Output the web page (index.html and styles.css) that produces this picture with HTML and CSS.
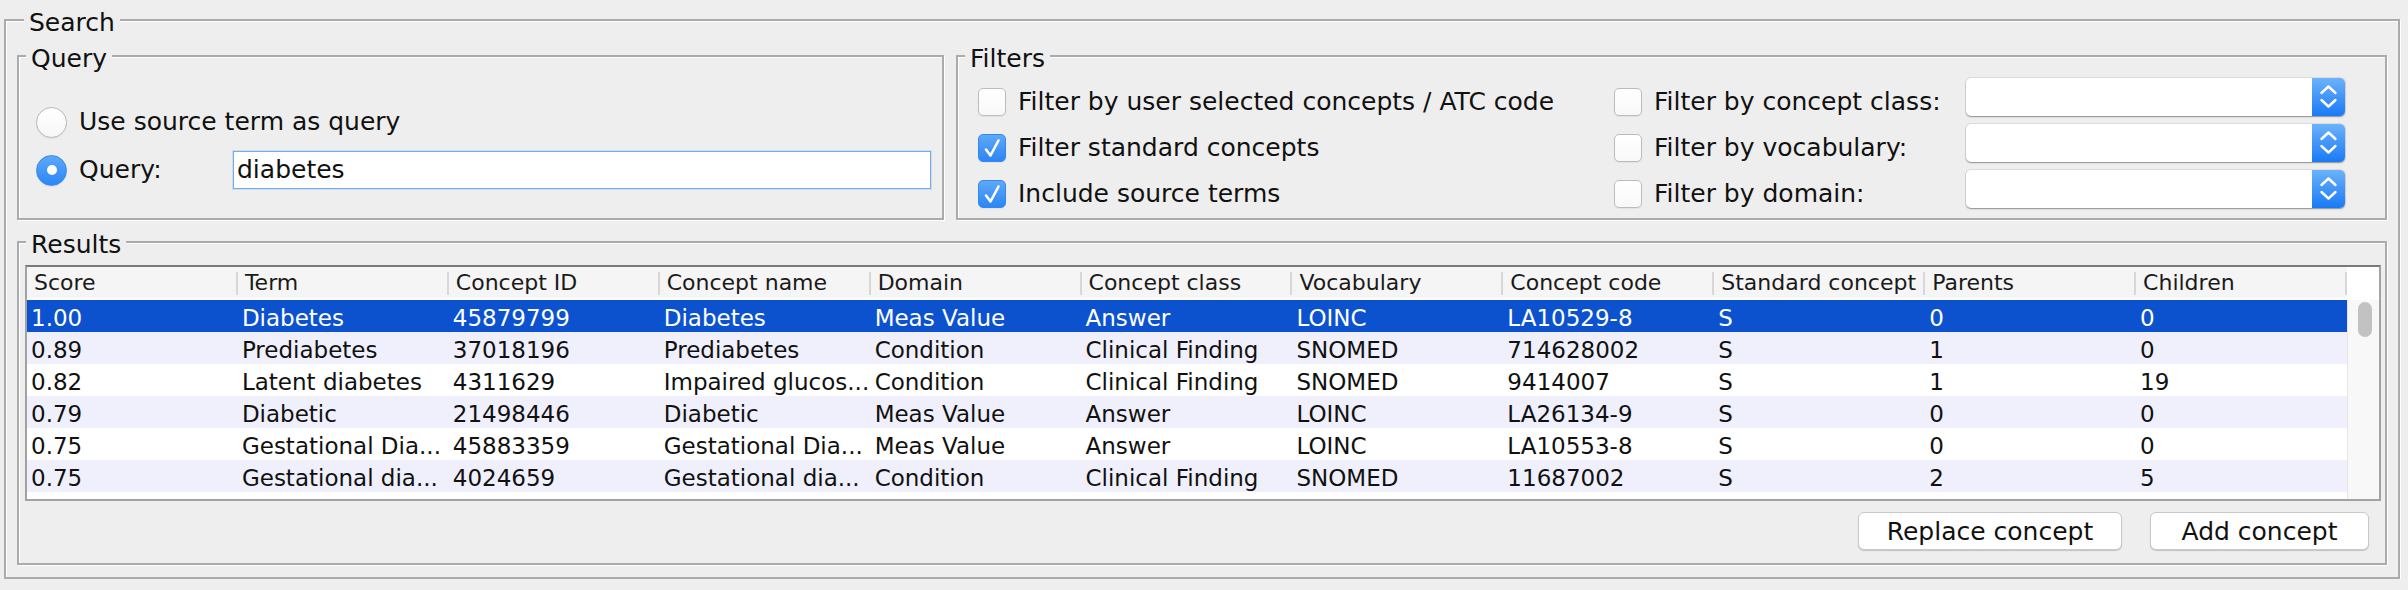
FILE: index.html
```html
<!DOCTYPE html>
<html>
<head>
<meta charset="utf-8">
<title>Search</title>
<link rel="stylesheet" href="styles.css">
</head>
<body>
<div class="page">
  <fieldset class="group search">
    <legend class="group-title">Search</legend>
    <div class="top-row">
      <fieldset class="group query">
        <legend class="group-title">Query</legend>
        <div class="query-body">
          <div class="query-row">
            <span class="radio"></span>
            <span class="label">Use source term as query</span>
          </div>
          <div class="query-row">
            <div class="query-label">
              <span class="radio on"></span>
              <span class="label">Query:</span>
            </div>
            <div class="textfield">diabetes</div>
          </div>
        </div>
      </fieldset>
      <fieldset class="group filters">
        <legend class="group-title">Filters</legend>
        <div class="filter-grid">
          <div class="check-item"><span class="check"></span><span class="label">Filter by user selected concepts / ATC code</span></div>
          <div class="check-item"><span class="check"></span><span class="label">Filter by concept class:</span></div>
          <div class="combo"><span class="combo-field"></span><span class="combo-btn"><svg width="33" height="38" viewBox="0 0 33 38"><polyline points="9.5,15 16.5,8.5 23.5,15" fill="none" stroke="#fff" stroke-width="2.4" stroke-linecap="round" stroke-linejoin="round"/><polyline points="9.5,22 16.5,28.5 23.5,22" fill="none" stroke="#fff" stroke-width="2.4" stroke-linecap="round" stroke-linejoin="round"/></svg></span></div>

          <div class="check-item"><span class="check on"><svg width="26" height="26" viewBox="0 0 26 26"><polyline points="7,14.5 11.5,20.5 19.5,5.5" fill="none" stroke="#fff" stroke-width="2.6" stroke-linecap="round" stroke-linejoin="round"/></svg></span><span class="label">Filter standard concepts</span></div>
          <div class="check-item"><span class="check"></span><span class="label">Filter by vocabulary:</span></div>
          <div class="combo"><span class="combo-field"></span><span class="combo-btn"><svg width="33" height="38" viewBox="0 0 33 38"><polyline points="9.5,15 16.5,8.5 23.5,15" fill="none" stroke="#fff" stroke-width="2.4" stroke-linecap="round" stroke-linejoin="round"/><polyline points="9.5,22 16.5,28.5 23.5,22" fill="none" stroke="#fff" stroke-width="2.4" stroke-linecap="round" stroke-linejoin="round"/></svg></span></div>

          <div class="check-item"><span class="check on"><svg width="26" height="26" viewBox="0 0 26 26"><polyline points="7,14.5 11.5,20.5 19.5,5.5" fill="none" stroke="#fff" stroke-width="2.6" stroke-linecap="round" stroke-linejoin="round"/></svg></span><span class="label">Include source terms</span></div>
          <div class="check-item"><span class="check"></span><span class="label">Filter by domain:</span></div>
          <div class="combo"><span class="combo-field"></span><span class="combo-btn"><svg width="33" height="38" viewBox="0 0 33 38"><polyline points="9.5,15 16.5,8.5 23.5,15" fill="none" stroke="#fff" stroke-width="2.4" stroke-linecap="round" stroke-linejoin="round"/><polyline points="9.5,22 16.5,28.5 23.5,22" fill="none" stroke="#fff" stroke-width="2.4" stroke-linecap="round" stroke-linejoin="round"/></svg></span></div>
        </div>
      </fieldset>
    </div>

    <fieldset class="group results">
      <legend class="group-title">Results</legend>
      <div class="results-body">
        <div class="table">
          <div class="table-main">
            <div class="thead">
              <div class="th">Score</div>
              <div class="th">Term</div>
              <div class="th">Concept ID</div>
              <div class="th">Concept name</div>
              <div class="th">Domain</div>
              <div class="th">Concept class</div>
              <div class="th">Vocabulary</div>
              <div class="th">Concept code</div>
              <div class="th">Standard concept</div>
              <div class="th">Parents</div>
              <div class="th">Children</div>
            </div>
            <div class="tbody">
              <div class="tr selected">
                <div class="td">1.00</div><div class="td">Diabetes</div><div class="td">45879799</div><div class="td">Diabetes</div><div class="td">Meas Value</div><div class="td">Answer</div><div class="td">LOINC</div><div class="td">LA10529-8</div><div class="td">S</div><div class="td">0</div><div class="td">0</div>
              </div>
              <div class="tr alt">
                <div class="td">0.89</div><div class="td">Prediabetes</div><div class="td">37018196</div><div class="td">Prediabetes</div><div class="td">Condition</div><div class="td">Clinical Finding</div><div class="td">SNOMED</div><div class="td">714628002</div><div class="td">S</div><div class="td">1</div><div class="td">0</div>
              </div>
              <div class="tr">
                <div class="td">0.82</div><div class="td">Latent diabetes</div><div class="td">4311629</div><div class="td">Impaired glucos...</div><div class="td">Condition</div><div class="td">Clinical Finding</div><div class="td">SNOMED</div><div class="td">9414007</div><div class="td">S</div><div class="td">1</div><div class="td">19</div>
              </div>
              <div class="tr alt">
                <div class="td">0.79</div><div class="td">Diabetic</div><div class="td">21498446</div><div class="td">Diabetic</div><div class="td">Meas Value</div><div class="td">Answer</div><div class="td">LOINC</div><div class="td">LA26134-9</div><div class="td">S</div><div class="td">0</div><div class="td">0</div>
              </div>
              <div class="tr">
                <div class="td">0.75</div><div class="td">Gestational Dia...</div><div class="td">45883359</div><div class="td">Gestational Dia...</div><div class="td">Meas Value</div><div class="td">Answer</div><div class="td">LOINC</div><div class="td">LA10553-8</div><div class="td">S</div><div class="td">0</div><div class="td">0</div>
              </div>
              <div class="tr alt">
                <div class="td">0.75</div><div class="td">Gestational dia...</div><div class="td">4024659</div><div class="td">Gestational dia...</div><div class="td">Condition</div><div class="td">Clinical Finding</div><div class="td">SNOMED</div><div class="td">11687002</div><div class="td">S</div><div class="td">2</div><div class="td">5</div>
              </div>
            </div>
          </div>
          <div class="vscroll">
            <div class="corner"></div>
            <div class="track"><div class="thumb"></div></div>
          </div>
        </div>
        <div class="buttons">
          <button class="btn btn-replace">Replace concept</button>
          <button class="btn btn-add">Add concept</button>
        </div>
      </div>
    </fieldset>
  </fieldset>
</div>
</body>
</html>
```

FILE: styles.css
```css
html, body {
  margin: 0;
  padding: 0;
  background: #eeeeee;
}

body {
  font-family: "DejaVu Sans", "Liberation Sans", sans-serif;
  font-size: 25px;
  color: #111;
}

.page {
  padding: 2px 8px 0 4px;
}

/* etched titled border */
.group {
  margin: 0;
  min-width: 0;
  border: 2px solid #ababab;
  box-shadow: inset 1px 1px 0 #ffffff, 1px 1px 0 #ffffff;
  padding: 0;
}

.group-title {
  margin-left: 7px;
  padding: 6px 5px 0 5px;
  line-height: 30px;
  font-size: 25px;
  background: #eeeeee;
  color: #111;
}

.search {
  padding: 0 11px 12px 11px;
}

.top-row {
  display: flex;
  align-items: stretch;
}

.query {
  flex: 0 0 927px;
  box-sizing: border-box;
}

.filters {
  flex: 1 1 auto;
  margin-left: 12px;
}

/* Query group */
.query-body {
  padding: 24px 11px 24px 17px;
}

.query-row {
  display: flex;
  align-items: center;
  height: 48px;
}

.query-label {
  display: flex;
  align-items: center;
  flex: 0 0 197px;
}

.label {
  white-space: nowrap;
  line-height: 30px;
}

.radio {
  flex: 0 0 auto;
  box-sizing: border-box;
  width: 31px;
  height: 31px;
  margin-right: 12px;
  border-radius: 50%;
  background: linear-gradient(#ffffff, #f7f7f7);
  border: 1px solid #b8b8b8;
  box-shadow: 0 1px 1px rgba(0, 0, 0, 0.06);
}

.radio.on {
  display: flex;
  align-items: center;
  justify-content: center;
  background: linear-gradient(#5ea8f9, #2c86f5);
  border-color: #3488ee;
}

.radio.on::after {
  content: "";
  width: 10px;
  height: 10px;
  border-radius: 50%;
  background: #ffffff;
}

.textfield {
  flex: 1 1 auto;
  box-sizing: border-box;
  height: 38px;
  background: #ffffff;
  border: 1px solid #78a9e8;
  box-shadow: 0 0 0 1px #c9ddf6;
  padding: 0 3px;
  line-height: 36px;
}

/* Filters group */
.filter-grid {
  display: grid;
  grid-template-columns: 636px 352px 1fr;
  grid-auto-rows: 46px;
  padding: 4px 40px 2px 20px;
}

.check-item {
  display: flex;
  align-items: center;
  box-sizing: border-box;
  height: 46px;
  padding-top: 2px;
}

.check {
  flex: 0 0 auto;
  box-sizing: border-box;
  width: 28px;
  height: 28px;
  margin-right: 12px;
  border-radius: 5px;
  background: linear-gradient(#ffffff, #f8f8f8);
  border: 1px solid #bcbcbc;
  box-shadow: 0 1px 1px rgba(0, 0, 0, 0.05);
  display: flex;
  align-items: center;
  justify-content: center;
}

.check.on {
  background: linear-gradient(#5ea8f9, #2c86f5);
  border-color: #3488ee;
}

.combo {
  align-self: start;
  display: flex;
  height: 38px;
  border-radius: 5px;
  background: #ffffff;
  box-shadow: 0 0 0 1px rgba(0, 0, 0, 0.07), 0 1px 1.5px rgba(0, 0, 0, 0.35);
}

.combo-field {
  flex: 1 1 auto;
}

.combo-btn {
  flex: 0 0 33px;
  display: flex;
  border-radius: 0 5px 5px 0;
  background: linear-gradient(#6bb2fa, #1a7af5);
}

/* Results group */
.results {
  margin-top: 4px;
}

.results-body {
  padding: 5px 4px 13px 6px;
}

.table {
  display: flex;
  border: 2px solid #a2a2a2;
  border-top-color: #7a7a7a;
  background: #ffffff;
}

.table-main {
  flex: 1 1 auto;
  min-width: 0;
}

.thead {
  display: grid;
  grid-template-columns: repeat(11, 1fr);
  height: 31px;
  margin-bottom: 2px;
  background: #f5f5f5;
}

.th {
  font-size: 22px;
  line-height: 31px;
  padding-left: 7px;
  white-space: nowrap;
  overflow: hidden;
  color: #1a1a1a;
  background: linear-gradient(#d8d8d8, #d8d8d8) no-repeat right 0 top 5px / 2px 23px;
}

.tbody {
  height: 199px;
  overflow: hidden;
}

.tr {
  display: grid;
  grid-template-columns: repeat(11, 1fr);
  height: 32px;
  background: #ffffff;
}

.tr.alt {
  background: #eff0fc;
}

.tr.selected {
  background: #0c52cf;
  color: #ffffff;
}

.td {
  font-size: 23px;
  line-height: 28px;
  padding: 4px 0 0 4px;
  white-space: nowrap;
  overflow: hidden;
}

.vscroll {
  flex: 0 0 32px;
  display: flex;
  flex-direction: column;
}

.corner {
  height: 33px;
  background: #ffffff;
}

.track {
  height: 199px;
  box-sizing: border-box;
  background: #f8f8f8;
  border-left: 1px solid #e6e6e6;
  padding: 2px 0 0 10px;
}

.thumb {
  width: 14px;
  height: 35px;
  border-radius: 7px;
  background: #c2c2c2;
}

.buttons {
  display: flex;
  justify-content: flex-end;
  gap: 28px;
  margin-top: 11px;
  padding-right: 12px;
}

.btn {
  box-sizing: border-box;
  height: 38px;
  padding: 0;
  font-family: "DejaVu Sans", "Liberation Sans", sans-serif;
  font-size: 25px;
  color: #111;
  background: #ffffff;
  border: 1px solid #c9c9c9;
  border-radius: 6px;
  box-shadow: 0 1px 1px rgba(0, 0, 0, 0.18);
}

.btn-replace {
  width: 264px;
}

.btn-add {
  width: 219px;
}
```
